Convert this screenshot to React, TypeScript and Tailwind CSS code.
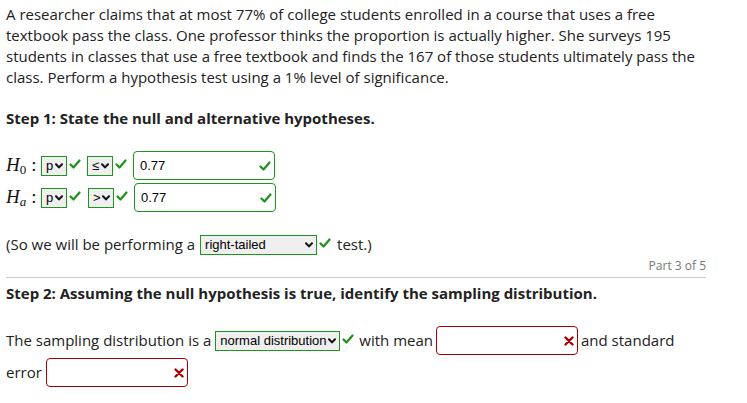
import React from 'react';

const Check = ({ className = '' }: { className?: string }) => (
  <svg viewBox="0 0 12 10" className={`w-[12px] h-[10px] ${className}`}>
    <polyline points="1.5,5.5 4.5,8.5 10.5,1.5" fill="none" stroke="#1e901e" strokeWidth="2.2" strokeLinecap="round" strokeLinejoin="round" />
  </svg>
);

const Cross = () => (
  <svg viewBox="0 0 10 10" className="w-[10px] h-[10px]">
    <path d="M1.5 1.5 L8.5 8.5 M8.5 1.5 L1.5 8.5" stroke="#a80000" strokeWidth="2.4" strokeLinecap="round" />
  </svg>
);

const Chevron = () => (
  <svg viewBox="0 0 8 6" className="w-[8px] h-[6px] shrink-0">
    <polyline points="1,1.2 4,4.4 7,1.2" fill="none" stroke="#111" strokeWidth="2" strokeLinecap="round" strokeLinejoin="round" />
  </svg>
);

const Select = ({ label, width }: { label: string; width: string }) => (
  <div
    className={`${width} h-[20px] border border-[#1a961a] bg-[#efefef] flex items-center justify-between pl-[4px] pr-[3px] text-[13px] text-black`}
    style={{ fontFamily: '"Liberation Sans", Arial, sans-serif' }}
  >
    <span className="leading-none whitespace-nowrap">{label}</span>
    <Chevron />
  </div>
);

const Field = ({ value, ok, width }: { value?: string; ok: boolean; width: string }) => (
  <div
    className={`${width} h-[29px] rounded-[4px] border flex items-center justify-between pl-[6px] pr-[3px] bg-white text-[13px] text-black ${ok ? 'border-[#1a961a]' : 'border-[#a80000]'}`}
    style={{ fontFamily: '"Liberation Sans", Arial, sans-serif' }}
  >
    <span>{value}</span>
    {ok ? <Check /> : <Cross />}
  </div>
);

const Hyp = ({ sub, subItalic }: { sub: string; subItalic?: boolean }) => (
  <span className="w-[35px] text-[19px] text-[#111] whitespace-nowrap" style={{ fontFamily: '"Liberation Serif", serif' }}>
    <i>H</i>
    <span className={`text-[13px] relative top-[3px] ${subItalic ? 'italic' : ''}`}>{sub}</span>
    <span className="ml-[5px]">:</span>
  </span>
);

export default function App() {
  return (
    <div
      className="w-[747px] h-[403px] bg-white text-[15px] text-[#222] px-[6px] overflow-hidden"
      style={{ fontFamily: '"Open Sans", sans-serif' }}
    >
      <div className="w-[700px]">
        <p className="pt-[4px] leading-[21px]">
          A researcher claims that at most 77% of college students enrolled in a course that uses a free textbook pass the
          class. One professor thinks the proportion is actually higher. She surveys 195 students in classes that use a free
          textbook and finds the 167 of those students ultimately pass the class. Perform a hypothesis test using a 1% level
          of significance.
        </p>

        <p className="mt-[20px] leading-[21px] font-bold">Step 1: State the null and alternative hypotheses.</p>

        <div className="mt-[22px] h-[29px] flex items-center">
          <Hyp sub="0" />
          <Select label="p" width="w-[26px]" />
          <Check className="ml-[2px] -mt-[4px]" />
          <div className="ml-[6px]"><Select label="≤" width="w-[26px]" /></div>
          <Check className="ml-[2px] -mt-[4px]" />
          <div className="ml-[6px]"><Field value="0.77" ok width="w-[142px]" /></div>
        </div>

        <div className="mt-[3px] h-[29px] flex items-center">
          <Hyp sub="a" subItalic />
          <Select label="p" width="w-[26px]" />
          <Check className="ml-[2px] -mt-[4px]" />
          <div className="ml-[7px]"><Select label=">" width="w-[26px]" /></div>
          <Check className="ml-[2px] -mt-[4px]" />
          <div className="ml-[6px]"><Field value="0.77" ok width="w-[142px]" /></div>
        </div>

        <div className="mt-[22px] h-[21px] flex items-center">
          <span className="leading-[21px] whitespace-nowrap">(So we will be performing a</span>
          <div className="ml-[5px]"><Select label="right-tailed" width="w-[117px]" /></div>
          <Check className="ml-[2px] -mt-[4px]" />
          <span className="ml-[6px] leading-[21px]">test.)</span>
        </div>

        <div className="mt-[3px] text-right text-[12px] leading-[16px] text-[#777]">Part 3 of 5</div>
        <div className="mt-[3px] border-t border-[#cccccc]" />

        <p className="mt-[5px] leading-[21px] font-bold">
          Step 2: Assuming the null hypothesis is true, identify the sampling distribution.
        </p>

        <div className="mt-[22px] h-[29px] flex items-center whitespace-nowrap">
          <span>The sampling distribution is a</span>
          <div className="ml-[4px]"><Select label="normal distribution" width="w-[125px]" /></div>
          <Check className="ml-[2px] -mt-[4px]" />
          <span className="ml-[5px]">with mean</span>
          <div className="ml-[3px]"><Field ok={false} width="w-[142px]" /></div>
          <span className="ml-[3px]">and standard</span>
        </div>

        <div className="mt-[3px] h-[29px] flex items-center">
          <span>error</span>
          <div className="ml-[4px]"><Field ok={false} width="w-[142px]" /></div>
        </div>
      </div>
    </div>
  );
}
